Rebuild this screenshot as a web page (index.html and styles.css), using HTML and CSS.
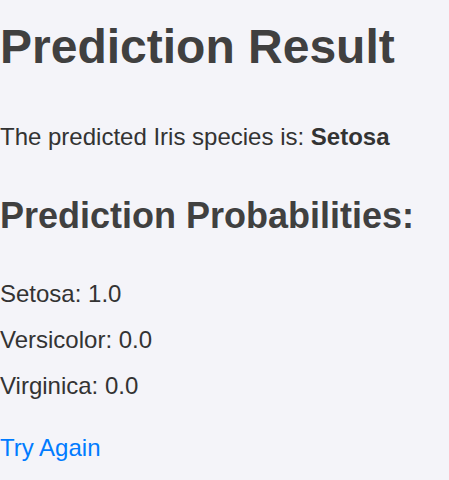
FILE: index.html
```html
<!DOCTYPE html>
<html lang="en">
<head>
<meta charset="utf-8">
<title>Prediction Result</title>
<link rel="stylesheet" href="styles.css">
</head>
<body>
<main class="page">
  <h1 class="title">Prediction Result</h1>
  <p class="text">The predicted Iris species is: <strong>Setosa</strong></p>
  <h2 class="subtitle">Prediction Probabilities:</h2>
  <p class="text">Setosa: 1.0</p>
  <p class="text">Versicolor: 0.0</p>
  <p class="text">Virginica: 0.0</p>
  <p class="text link-row"><a class="link" href="#">Try Again</a></p>
</main>
</body>
</html>
```
FILE: styles.css
```css
html, body {
  margin: 0;
  padding: 0;
  background: #f4f4f9;
}
body {
  font-family: "Liberation Sans", Arial, sans-serif;
  color: #333333;
}
.page {
  display: flow-root;
  padding: 0;
}
.title {
  font-size: 48px;
  font-weight: bold;
  line-height: normal;
  color: #404040;
  margin: 19px 0 49px;
}
.subtitle {
  font-size: 36px;
  font-weight: bold;
  line-height: normal;
  color: #404040;
  margin: 44px 0 43px;
}
.text {
  font-size: 24px;
  line-height: normal;
  margin: 18px 0;
}
.link-row {
  margin-top: 34px;
}
.link {
  color: #007bff;
  text-decoration: none;
}
```
